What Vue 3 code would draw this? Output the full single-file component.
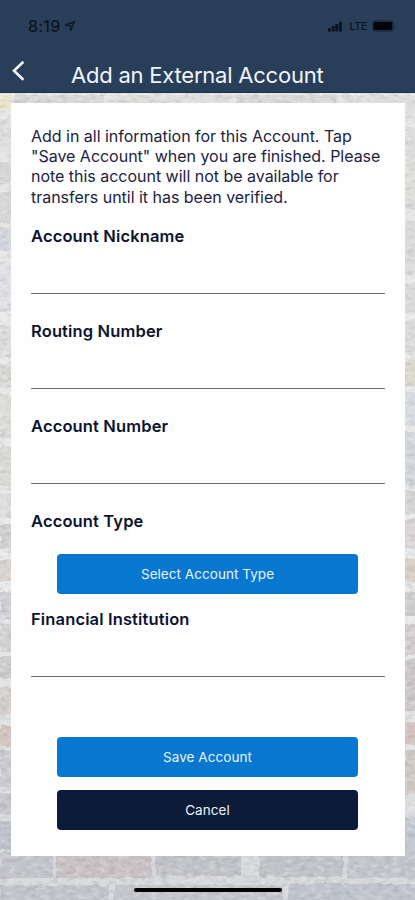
<script setup>
const intro = [
  'Add in all information for this Account. Tap',
  '"Save Account" when you are finished. Please',
  'note this account will not be available for',
  'transfers until it has been verified.',
]

const fields = [
  { id: 'nickname', label: 'Account Nickname' },
  { id: 'routing', label: 'Routing Number' },
  { id: 'number', label: 'Account Number' },
]

// x, y, width, height and tint of every brick of the wall
const bricks = [
  [0, 95, 11, 14, '#ece5cb'], [14, 95, 90, 9, '#d9d9d8'], [110, 95, 120, 9, '#dededc'],
  [236, 95, 100, 9, '#d9dad9'], [342, 95, 64, 9, '#dddedc'],
  [0, 120, 12, 30, '#dfdfdd'], [0, 162, 11, 24, '#d5d6d7'], [0, 192, 12, 30, '#d5d6d8'],
  [0, 227, 12, 24, '#d4d7dd'], [0, 262, 12, 50, '#dfe1e6'], [0, 325, 12, 32, '#dededc'],
  [0, 364, 12, 24, '#dad9d5'], [0, 395, 12, 44, '#dddcd8'], [0, 446, 12, 40, '#dbdad6'],
  [0, 492, 12, 26, '#dcdedd'], [0, 524, 12, 25, '#d2d0cf'], [0, 559, 12, 22, '#dad5d0'],
  [0, 593, 12, 26, '#cfd1d4'], [0, 624, 12, 28, '#d3d1d2'], [0, 656, 12, 22, '#cdcaca'],
  [0, 687, 12, 28, '#d5cfcd'], [0, 725, 12, 22, '#d3c4c0'], [0, 751, 12, 36, '#cacbcf'],
  [0, 793, 12, 21, '#c6c6cb'], [0, 821, 12, 29, '#bec2c9'],
  [403, 95, 12, 27, '#dfdfdd'], [404, 127, 13, 30, '#dcdddc'], [404, 161, 13, 48, '#dededb'],
  [404, 220, 13, 55, '#dcdddb'], [404, 283, 13, 31, '#dadcdb'], [404, 320, 13, 32, '#dcdcda'],
  [404, 361, 13, 24, '#dbd8cf'], [404, 392, 13, 34, '#dadde1'], [404, 432, 13, 53, '#d4d7da'],
  [404, 491, 13, 23, '#d8d6d5'], [404, 520, 13, 28, '#d9d6d5'], [404, 559, 13, 23, '#d9cec6'],
  [404, 593, 13, 23, '#cfcdcf'], [404, 624, 13, 31, '#d3cece'], [404, 659, 13, 52, '#cdc8c9'],
  [404, 722, 13, 23, '#d3c2c2'], [404, 750, 13, 44, '#cfc7c4'], [404, 818, 13, 34, '#c3c7cf'],
  [0, 852, 53, 26, '#c3c4ca'], [56, 852, 95, 26, '#c8c1c4'], [155, 852, 86, 24, '#c1c2c7'],
  [260, 850, 83, 27, '#c0c2c8'], [348, 850, 69, 28, '#c3c5cc'],
  [0, 885, 109, 18, '#c1c4ca'], [114, 885, 169, 18, '#c3c5cb'], [288, 884, 129, 19, '#bfc3cb'],
]
</script>

<template>
  <div class="screen">
    <svg class="wall" viewBox="0 0 415 900" aria-hidden="true">
      <defs>
        <linearGradient id="mortar" x1="0" y1="0" x2="0" y2="1">
          <stop offset="0" stop-color="#e6e6e3" />
          <stop offset="0.65" stop-color="#e8eaeb" />
          <stop offset="1" stop-color="#d6d7da" />
        </linearGradient>
        <filter id="rough" x="0" y="0" width="415" height="900" filterUnits="userSpaceOnUse" color-interpolation-filters="sRGB">
          <feTurbulence type="fractalNoise" baseFrequency="0.09" numOctaves="3" seed="4" result="n" />
          <feDisplacementMap in="SourceGraphic" in2="n" scale="5" xChannelSelector="R" yChannelSelector="G" />
          <feGaussianBlur stdDeviation="0.7" />
        </filter>
        <filter id="grain" x="0" y="0" width="100%" height="100%" color-interpolation-filters="sRGB">
          <feTurbulence type="fractalNoise" baseFrequency="0.13 0.24" numOctaves="4" seed="9" />
          <feColorMatrix values="0 0 0 0 0.55  0 0 0 0 0.55  0 0 0 0 0.57  1.6 0 0 0 -0.72" />
        </filter>
        <filter id="chalk" x="0" y="0" width="100%" height="100%" color-interpolation-filters="sRGB">
          <feTurbulence type="fractalNoise" baseFrequency="0.12 0.22" numOctaves="4" seed="21" />
          <feColorMatrix values="0 0 0 0 1  0 0 0 0 1  0 0 0 0 1  1.8 0 0 0 -0.8" />
        </filter>
      </defs>
      <rect width="415" height="900" fill="url(#mortar)" />
      <g filter="url(#rough)">
        <rect
          v-for="(b, i) in bricks"
          :key="i"
          :x="b[0]"
          :y="b[1]"
          :width="b[2]"
          :height="b[3]"
          :fill="b[4]"
          rx="1"
        />
      </g>
      <rect width="415" height="900" filter="url(#grain)" opacity="0.42" />
      <rect width="415" height="900" filter="url(#chalk)" opacity="0.42" />
    </svg>

    <header class="header">
      <div class="status">
        <div class="clock">
          <span class="time">8:19</span>
          <svg width="12" height="12" viewBox="0 0 12 12">
            <path d="M1.2 5.2 10.6 1.4 6.7 10.2 6.3 5.7z" fill="none" stroke="#111c2a" stroke-width="1.6" stroke-linejoin="round" />
          </svg>
        </div>
        <div class="signal">
          <svg width="15" height="11" viewBox="0 0 15 11" fill="#08111d">
            <rect x="0" y="7" width="2.8" height="3.5" rx="0.6" />
            <rect x="3.8" y="5" width="2.8" height="5.5" rx="0.6" />
            <rect x="7.4" y="3" width="2.8" height="7.5" rx="0.6" />
            <rect x="11" y="0.7" width="2.8" height="9.8" rx="0.6" />
          </svg>
          <span class="lte">LTE</span>
          <svg width="26" height="12" viewBox="0 0 26 12">
            <rect x="0.5" y="0.7" width="21" height="10.6" rx="2.6" fill="none" stroke="#1d2c40" />
            <rect x="1.4" y="1.8" width="19" height="8.4" rx="1.2" fill="#02060c" />
            <path d="M23.2 4.3q1.5 1.6 0 3.4z" fill="#1d2c40" />
          </svg>
        </div>
      </div>
      <div class="bar">
        <svg class="back" width="14" height="22" viewBox="0 0 14 22">
          <path d="M12.4 1.8 3 10.7 12.4 19.8" fill="none" stroke="#f3f7fb" stroke-width="2.6" />
        </svg>
        <h1 class="title">Add an External Account</h1>
      </div>
    </header>

    <main class="card">
      <p class="intro">
        <span v-for="line in intro" :key="line">{{ line }}</span>
      </p>
      <div v-for="f in fields" :key="f.id" class="field">
        <label :for="f.id">{{ f.label }}</label>
        <input :id="f.id" type="text" />
      </div>
      <div class="field select">
        <span class="label">Account Type</span>
        <button class="btn" type="button">Select Account Type</button>
      </div>
      <div class="field institution">
        <label for="institution">Financial Institution</label>
        <input id="institution" type="text" />
      </div>
      <div class="actions">
        <button class="btn save" type="button">Save Account</button>
        <button class="btn cancel" type="button">Cancel</button>
      </div>
    </main>
    <div class="home"></div>
  </div>
</template>

<style>
body {
  margin: 0;
}
</style>

<style scoped>
.screen {
  position: relative;
  box-sizing: border-box;
  width: 415px;
  height: 900px;
  overflow: hidden;
  display: flex;
  flex-direction: column;
  font-family: Inter, "Liberation Sans", sans-serif;
  color: #1c2340;
}
.wall {
  position: absolute;
  inset: 0;
  width: 415px;
  height: 900px;
}
.header {
  position: relative;
  flex: none;
  box-sizing: border-box;
  height: 93px;
  background: #293e58;
  border-bottom: 1px solid #1d3049;
}
.status {
  display: flex;
  justify-content: space-between;
  align-items: center;
  height: 20px;
  padding: 16px 17px 0 28px;
}
.clock,
.signal {
  display: flex;
  align-items: center;
}
.clock {
  gap: 4px;
}
.time {
  font-size: 16px;
  font-weight: 500;
  line-height: 20px;
  letter-spacing: 0.2px;
  color: #0b1420;
}
.lte {
  margin: 0 5px 0 7px;
  font-size: 11px;
  font-weight: 500;
  line-height: 20px;
  letter-spacing: -0.5px;
  color: #0b1420;
}
.bar {
  display: flex;
  align-items: center;
  height: 30px;
  padding: 24px 11px 0;
}
.back {
  flex: none;
  margin-top: -8px;
}
.title {
  flex: none;
  margin: 0 0 0 46px;
  font-size: 22px;
  font-weight: 400;
  line-height: 30px;
  letter-spacing: -0.22px;
  white-space: nowrap;
  color: #f1f5fa;
}
.card {
  position: relative;
  box-sizing: border-box;
  width: 394px;
  height: 753px;
  margin: 10px 0 0 11px;
  padding: 22.5px 20px 0;
  background: #fefefe;
}
.intro {
  margin: 0;
  font-size: 16px;
  line-height: 20.4px;
  letter-spacing: -0.02px;
}
.intro span {
  display: block;
  white-space: nowrap;
}
.field {
  display: flex;
  flex-direction: column;
  height: 95px;
}
.intro + .field {
  margin-top: 16.9px;
}
label,
.label {
  font-size: 16.5px;
  font-weight: 600;
  line-height: 24px;
  letter-spacing: 0.14px;
  color: #0c1430;
}
input {
  box-sizing: border-box;
  width: 354px;
  height: 34px;
  margin: 12px 0 0;
  padding: 0;
  border: 0;
  border-bottom: 1px solid #6c6c75;
  border-radius: 0;
  background: transparent;
  outline: none;
}
.btn {
  display: block;
  flex: none;
  box-sizing: border-box;
  width: 301px;
  height: 40px;
  margin: 0 0 0 26px;
  padding: 0;
  border: 0;
  border-radius: 4px;
  background: #0877d0;
  color: #eaf4fc;
  font: 400 13.5px/40px Inter, "Liberation Sans", sans-serif;
  letter-spacing: 0.05px;
  text-align: center;
}
.select {
  height: 98px;
}
.select .btn {
  margin-top: 21px;
}
.institution {
  height: 130px;
}
.cancel {
  margin-top: 13px;
  background: #0c1c38;
}
.home {
  position: relative;
  width: 148px;
  height: 4px;
  margin: 32px 0 0 134px;
  border-radius: 2px;
  background: #020203;
}
</style>
